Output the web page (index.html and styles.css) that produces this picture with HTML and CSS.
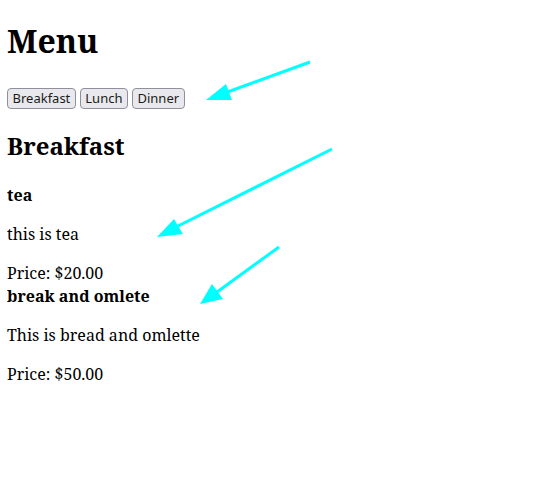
FILE: index.html
```html
<!DOCTYPE html>
<html>
<head>
<meta charset="utf-8">
<link rel="stylesheet" href="styles.css">
</head>
<body>
<h1 class="title">Menu</h1>
<div class="tabs">
  <button class="tab">Breakfast</button>
  <button class="tab">Lunch</button>
  <button class="tab">Dinner</button>
</div>
<h2 class="section">Breakfast</h2>
<div class="item">
  <h4 class="item-name">tea</h4>
  <p class="item-desc">this is tea</p>
  <div class="item-price">Price: $20.00</div>
</div>
<div class="item">
  <h4 class="item-name item-name-tight">break and omlete</h4>
  <p class="item-desc">This is bread and omlette</p>
  <div class="item-price">Price: $50.00</div>
</div>
<svg class="arrows" width="550" height="500" viewBox="0 0 550 500">
  <g stroke="#00ffff" stroke-width="3" fill="#00ffff">
    <line x1="310" y1="62" x2="222" y2="94"/>
    <polygon points="206,100 226,84 232,100" stroke="none"/>
    <line x1="332" y1="149" x2="172" y2="229"/>
    <polygon points="157,237 174,219 183,234" stroke="none"/>
    <line x1="279" y1="247" x2="213" y2="295"/>
    <polygon points="200,304 212,284 223,299" stroke="none"/>
  </g>
</svg>
</body>
</html>
```
FILE: styles.css
```css
body {
  margin: 8px 7px;
  font-family: "Noto Serif", "DejaVu Serif", serif;
  color: #000;
  background: #fff;
}
.title {
  font-size: 32px;
  margin: 11px 0 26.4px;
}
.tabs {
  display: flex;
  gap: 4px;
}
.tab {
  font-family: "Noto Sans", "Open Sans", sans-serif;
  font-size: 13px;
  height: 21px;
  padding: 0 4.5px;
  line-height: 19px;
  color: #1b1b1b;
  background: #e9e9ed;
  border: 1px solid #8f8f9d;
  border-radius: 4px;
}
.section {
  font-size: 24px;
  margin: 19.92px 0;
}
.item-name {
  font-size: 16px;
  margin: 21.28px 0 17px;
}
.item-name-tight {
  margin-top: 0;
}
.item-desc {
  margin: 17px 0 16px;
  line-height: 23px;
}
.item-price {
  margin: 0;
  line-height: 23px;
}
.arrows {
  position: absolute;
  left: 0;
  top: 0;
  pointer-events: none;
}
```
